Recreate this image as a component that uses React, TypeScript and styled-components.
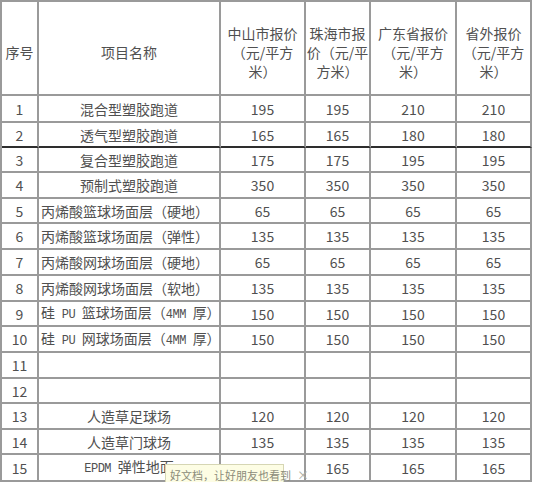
import type { ReactNode } from 'react';
import styled, { createGlobalStyle } from 'styled-components';

const GlobalStyle = createGlobalStyle`
	body {
		margin: 0;
		background: #fff;
	}
`;

const Page = styled.div`
	position: relative;
	width: 534px;
	height: 482px;
	overflow: hidden;
	font-family: 'Noto Sans CJK SC', 'DejaVu Sans', sans-serif;
	color: #505050;
`;

const Table = styled.table`
	table-layout: fixed;
	width: 532px;
	border-collapse: separate;
	border-spacing: 0;
	border-top: 2px solid #9a9a9a;
	border-left: 2px solid #9a9a9a;
	font-size: 14px;
`;

const HeadRow = styled.tr`
	height: 94px;
`;

const HeadCell = styled.th`
	font-weight: normal;
	line-height: 19px;
	padding: 8px 0 0;
	text-align: center;
	border-right: 2px solid #9a9a9a;
	border-bottom: 2px solid #9a9a9a;
	white-space: nowrap;
	overflow: hidden;
`;

const Cell = styled.td<{ $thick?: boolean; $align?: 'left' | 'center' }>`
	padding: 0 0 0 ${p => (p.$align === 'left' ? '2px' : '0')};
	text-align: ${p => p.$align || 'center'};
	line-height: 18px;
	white-space: nowrap;
	overflow: hidden;
	border-right: 2px solid #9a9a9a;
	border-bottom: 2px solid ${p => (p.$thick ? '#2e2e2e' : '#9a9a9a')};
`;

const Latin = styled.span`
	font-family: 'Liberation Mono', monospace;
	font-size: 12px;
	letter-spacing: -0.5px;
	white-space: pre;
`;

const ShareTip = styled.div`
	position: absolute;
	left: 165px;
	top: 464px;
	width: 119px;
	height: 22px;
	box-sizing: border-box;
	padding: 2px 0 0 4px;
	background: #fdfde4;
	border: 1px solid #d6d6b4;
	font-size: 11px;
	line-height: 15px;
	color: #8c8c7a;
	white-space: nowrap;
`;

const Close = styled.span`
	margin-left: 6px;
	color: #b0b0a6;
	font-size: 12px;
`;

type Row = {
	no: number;
	name: ReactNode;
	align?: 'left' | 'center';
	prices: string[];
	h: number;
	thick?: boolean;
};

const rows: Row[] = [
	{ no: 1, name: '混合型塑胶跑道', prices: ['195', '195', '210', '210'], h: 27 },
	{ no: 2, name: '透气型塑胶跑道', prices: ['165', '165', '180', '180'], h: 25, thick: true },
	{ no: 3, name: '复合型塑胶跑道', prices: ['175', '175', '195', '195'], h: 25 },
	{ no: 4, name: '预制式塑胶跑道', prices: ['350', '350', '350', '350'], h: 26 },
	{ no: 5, name: '丙烯酸篮球场面层（硬地）', align: 'left', prices: ['65', '65', '65', '65'], h: 25 },
	{ no: 6, name: '丙烯酸篮球场面层（弹性）', align: 'left', prices: ['135', '135', '135', '135'], h: 26 },
	{ no: 7, name: '丙烯酸网球场面层（硬地）', align: 'left', prices: ['65', '65', '65', '65'], h: 26 },
	{ no: 8, name: '丙烯酸网球场面层（软地）', align: 'left', prices: ['135', '135', '135', '135'], h: 26 },
	{
		no: 9,
		name: (
			<>
				硅<Latin> PU </Latin>篮球场面层（<Latin>4MM </Latin>厚）
			</>
		),
		align: 'left',
		prices: ['150', '150', '150', '150'],
		h: 25,
	},
	{
		no: 10,
		name: (
			<>
				硅<Latin> PU </Latin>网球场面层（<Latin>4MM </Latin>厚）
			</>
		),
		align: 'left',
		prices: ['150', '150', '150', '150'],
		h: 26,
	},
	{ no: 11, name: '', prices: ['', '', '', ''], h: 26 },
	{ no: 12, name: '', prices: ['', '', '', ''], h: 25 },
	{ no: 13, name: '人造草足球场', prices: ['120', '120', '120', '120'], h: 26 },
	{ no: 14, name: '人造草门球场', prices: ['135', '135', '135', '135'], h: 25 },
	{
		no: 15,
		name: (
			<>
				<Latin>EPDM </Latin>弹性地面
			</>
		),
		prices: ['165', '165', '165', '165'],
		h: 27,
	},
];

const widths = [37, 182, 85, 65, 86, 75];

const App = () => {
	return (
		<Page>
			<GlobalStyle />
			<Table>
				<colgroup>
					{widths.map((w, i) => (
						<col key={i} style={{ width: w }} />
					))}
				</colgroup>
				<thead>
					<HeadRow>
						<HeadCell>序号</HeadCell>
						<HeadCell>项目名称</HeadCell>
						<HeadCell>
							中山市报价
							<br />
							（元/平方
							<br />
							米）
						</HeadCell>
						<HeadCell>
							珠海市报
							<br />
							价（元/平
							<br />
							方米）
						</HeadCell>
						<HeadCell>
							广东省报价
							<br />
							（元/平方
							<br />
							米）
						</HeadCell>
						<HeadCell>
							省外报价
							<br />
							（元/平方
							<br />
							米）
						</HeadCell>
					</HeadRow>
				</thead>
				<tbody>
					{rows.map(r => (
						<tr key={r.no} style={{ height: r.h }}>
							<Cell $thick={r.thick}>{r.no}</Cell>
							<Cell $thick={r.thick} $align={r.align}>
								{r.name}
							</Cell>
							{r.prices.map((p, i) => (
								<Cell key={i} $thick={r.thick}>
									{p}
								</Cell>
							))}
						</tr>
					))}
				</tbody>
			</Table>
			<ShareTip>
				好文档，让好朋友也看到<Close>×</Close>
			</ShareTip>
		</Page>
	);
};

export default App;
